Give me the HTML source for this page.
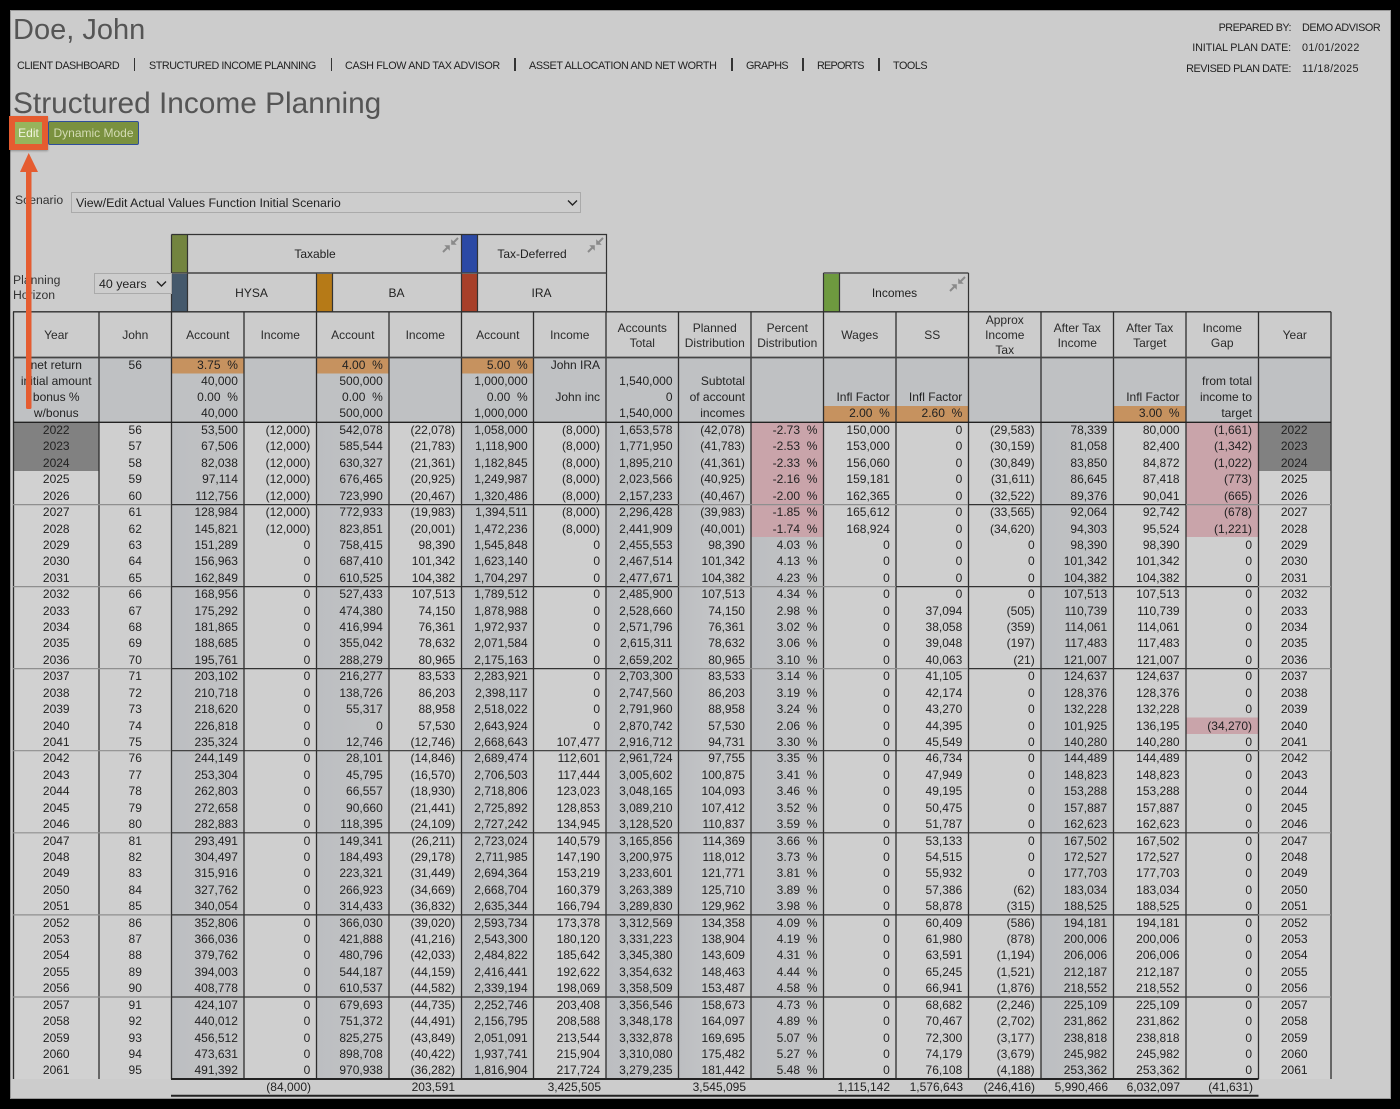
<!DOCTYPE html>
<html><head><meta charset="utf-8"><title>Structured Income Planning</title>
<style>
html,body{margin:0;padding:0;background:#000;width:1400px;height:1109px;overflow:hidden}
body{position:relative;font-family:"Liberation Sans",sans-serif;color:#222;font-size:12px}
#pg{position:absolute;left:10px;top:10px;width:1379px;height:1087px;background:#ccc;border:1px solid #999;box-sizing:content-box}
.a{position:absolute;white-space:nowrap}
svg{position:absolute;left:0;top:0}
.nav{font-size:10.8px;letter-spacing:-.46px;top:60px;line-height:13px;color:#222}
.sep{position:absolute;top:58px;width:1.5px;height:13px;background:#333}
.lb{font-size:10.8px;letter-spacing:-.43px;line-height:13px;color:#222}
.sel{position:absolute;border:1.5px solid #aaa;background:#cdcdcd;box-sizing:border-box;line-height:20px;padding-left:4px;font-size:12.4px;color:#222}
.h{position:absolute;text-align:center;line-height:14.7px;font-size:12px;color:#2a2a2a;display:flex;align-items:center;justify-content:center;width:72.5px;height:45px;top:313px}
.g{position:absolute;left:13.5px;width:1318px}
.r{display:grid;grid-template-columns:85.5px repeat(17,72.45px);height:16.42px;line-height:16.42px;white-space:nowrap}
.r i{font-style:normal;text-align:right;padding-right:6px;display:block;overflow:visible}
.r i:nth-child(1),.r i:nth-child(2),.r i:nth-child(18){text-align:center;padding-right:0}
.t{position:absolute;top:1080px;line-height:15px;text-align:right;white-space:nowrap}
</style></head><body>
<div id="pg"></div>

<svg width="1400" height="1109" viewBox="0 0 1400 1109" fill="none">
<defs>
<linearGradient id="s1"><stop offset="0" stop-color="#bcbec1"/><stop offset="1" stop-color="#c3c4c5"/></linearGradient>
<linearGradient id="s2"><stop offset="0" stop-color="#bcbec1"/><stop offset="1" stop-color="#cccccc"/></linearGradient>
</defs>
<!-- body rows base -->
<rect x="13.5" y="422" width="1317.5" height="657" fill="#cfcfcf"/>
<rect x="171.5" y="422" width="72.5" height="657" fill="url(#s1)"/>
<rect x="316.5" y="422" width="72.5" height="657" fill="url(#s1)"/>
<rect x="461.5" y="422" width="72" height="657" fill="url(#s1)"/>
<rect x="606" y="422" width="72.5" height="657" fill="url(#s1)"/>
<rect x="678.5" y="422" width="72.5" height="657" fill="url(#s2)"/>
<rect x="751" y="422" width="72.5" height="657" fill="url(#s1)"/>
<rect x="1041" y="422" width="72.5" height="657" fill="url(#s1)"/>
<!-- subheader -->
<rect x="13.5" y="357.5" width="1317.5" height="65" fill="#bfc1c3"/>
<rect x="172" y="358" width="71.5" height="15.5" fill="#c6925f"/>
<rect x="317" y="358" width="71.5" height="15.5" fill="#c6925f"/>
<rect x="462" y="358" width="71" height="15.5" fill="#c6925f"/>
<rect x="824" y="406" width="72" height="16" fill="#c6925f"/>
<rect x="896.5" y="406" width="72" height="16" fill="#c6925f"/>
<rect x="1114" y="406" width="72" height="16" fill="#c6925f"/>
<!-- pink / dark -->
<rect x="751.5" y="422.5" width="72" height="114.5" fill="#c9a4aa"/>
<rect x="1186" y="422.5" width="72" height="114.5" fill="#c9a4aa"/>
<rect x="1186" y="717.5" width="72" height="16.5" fill="#c9a4aa"/>
<rect x="13.5" y="422.5" width="85" height="48.5" fill="#818181"/>
<rect x="1258.5" y="422.5" width="72.5" height="48.5" fill="#818181"/>
<rect x="13.5" y="471" width="85" height="608" fill="#d1d1d1"/>
<rect x="1258.5" y="471" width="72.5" height="608" fill="#d1d1d1"/>
<!-- swatches -->
<rect x="172" y="235" width="15.5" height="38" fill="#73843f"/>
<rect x="462" y="235" width="15.5" height="38" fill="#2b49a5"/>
<rect x="172" y="274" width="15.5" height="38" fill="#45596c"/>
<rect x="317" y="274" width="15.5" height="38" fill="#b67a17"/>
<rect x="462" y="274" width="15.5" height="38" fill="#a73f29"/>
<rect x="824" y="274" width="15.5" height="38" fill="#6e9a3f"/>
<!-- header box lines -->
<g stroke="#333" stroke-width="1.2">
<path d="M171.5 234.5H606.5V312M171.5 234.5V312M187.5 234.5V312M461.5 234.5V312M477.5 234.5V312M316.5 273V312M332.5 273V312"/>
<path d="M823.5 273V312M839.5 273V312M968.5 273V312M823.5 273H968.5"/>
<path d="M171.5 273H606.5" stroke="#444" stroke-width="1.6"/>
</g>
<!-- table grid -->
<g stroke="#2e2e2e" stroke-width="1.3">
<path d="M13 311.8H1331"/>
<path d="M13.5 311.8V1079M99 311.8V1079M1331 311.8V1079"/>
<path d="M171.5 311.8V1079M244 311.8V1079M316.5 311.8V1079M389 311.8V1079M461.5 311.8V1079M533.5 311.8V1079M606 311.8V1079M678.5 311.8V1079M751 311.8V1079M823.5 311.8V1079M896 311.8V1079M968.5 311.8V1079M1041 311.8V1079M1113.5 311.8V1079M1186 311.8V1079M1258.5 311.8V1079"/>
<path d="M13 357.5H1331" stroke="#444" stroke-width="1.8"/>
<path d="M13 422.3H1331" stroke="#222" stroke-width="1.3"/>
</g>
<path d="M171 1079H1258.5M171 1095.8H1258.5" stroke="#222" stroke-width="2"/>
<!-- group separators -->
<g stroke-width="1.2">
<path d="M171 504.6H678.5M171 586.6H678.5M896 586.6H1258M171 668.6H678.5M968 668.6H1258M171 750.7H1258M171 832.8H1258M171 914.9H1258M171 997H1258M968 504.6H1186" stroke="#333"/>
<path d="M13 504.6H171M678.5 504.6H968M1186 504.6H1331M13 586.6H171M678.5 586.6H896M1258 586.6H1331M13 668.6H171M678.5 668.6H968M1258 668.6H1331M13 750.7H171M1258 750.7H1331M13 832.8H171M1258 832.8H1331M13 914.9H171M1258 914.9H1331M13 997H171M1258 997H1331" stroke="#8f8f8f"/>
</g>
<!-- compress icons -->
<g id="ic" fill="#8a8a8a" stroke="#8a8a8a" stroke-width="2">
<path d="M443 252L448 247M458 238L453 243" fill="none"/>
<path d="M449.5 245.5L445 245.5L449.5 250ZM451.5 244.5L456 244.5L451.5 240Z" stroke-width=".6"/>
<path d="M588 252L593 247M603 238L598 243" fill="none"/>
<path d="M594.5 245.5L590 245.5L594.5 250ZM596.5 244.5L601 244.5L596.5 240Z" stroke-width=".6"/>
<path d="M950 291L955 286M965 277L960 282" fill="none"/>
<path d="M956.5 284.5L952 284.5L956.5 289ZM958.5 283.5L963 283.5L958.5 279Z" stroke-width=".6"/>
</g>
</svg>

<div class="a" style="left:13px;top:12px;font-size:29px;line-height:36px;color:#555">Doe, John</div>
<div class="a nav" style="left:17px">CLIENT DASHBOARD</div><div class="sep" style="left:133.5px"></div>
<div class="a nav" style="left:149px">STRUCTURED INCOME PLANNING</div><div class="sep" style="left:330.5px"></div>
<div class="a nav" style="left:345px;letter-spacing:-.34px">CASH FLOW AND TAX ADVISOR</div><div class="sep" style="left:514px"></div>
<div class="a nav" style="left:529px;letter-spacing:-.36px">ASSET ALLOCATION AND NET WORTH</div><div class="sep" style="left:731px"></div>
<div class="a nav" style="left:746px;letter-spacing:-.6px">GRAPHS</div><div class="sep" style="left:802px"></div>
<div class="a nav" style="left:817px;letter-spacing:-.75px">REPORTS</div><div class="sep" style="left:878px"></div>
<div class="a nav" style="left:893px">TOOLS</div>

<div class="a lb" style="right:109px;top:22px;letter-spacing:-.5px">PREPARED BY:</div><div class="a lb" style="left:1302px;top:22px">DEMO ADVISOR</div>
<div class="a lb" style="right:109px;top:42px;letter-spacing:-.15px">INITIAL PLAN DATE:</div><div class="a lb" style="left:1302px;top:42px;letter-spacing:.37px">01/01/2022</div>
<div class="a lb" style="right:109px;top:63px">REVISED PLAN DATE:</div><div class="a lb" style="left:1302px;top:63px;letter-spacing:.37px">11/18/2025</div>

<div class="a" style="left:13px;top:86px;font-size:29.85px;line-height:36px;color:#555">Structured Income Planning</div>

<div class="a" style="left:9px;top:116px;width:39px;height:34px;background:#e55c30;box-shadow:0 1px 2px rgba(0,0,0,.3)"></div>
<div class="a" style="left:15px;top:122px;width:27px;height:22px;background:#97b45c;color:#f0f4e0;font-size:12px;line-height:22px;text-align:center">Edit</div>
<div class="a" style="left:48px;top:121px;width:91px;height:24px;box-sizing:border-box;background:#7a913f;border:1.5px solid #2f4e9a;border-radius:2px;color:#d3dbb4;font-size:12px;line-height:22.5px;text-align:center">Dynamic Mode</div>

<div class="a" style="left:15px;top:193px;line-height:14px;font-size:12.2px;color:#333">Scenario</div>
<div class="sel" style="left:71px;top:192px;width:510px;height:21px">View/Edit Actual Values Function Initial Scenario</div>

<div class="a" style="left:13px;top:273px;line-height:14.7px;font-size:12.2px;color:#333">Planning<br>Horizon</div>
<div class="sel" style="left:94px;top:273px;width:78px;height:21px">40 years</div>
<svg width="1400" height="1109" style="pointer-events:none"><path d="M568 200.5L572.5 205L577 200.5" stroke="#222" stroke-width="1.4" fill="none"/><path d="M157 281.5L161.5 286L166 281.5" stroke="#222" stroke-width="1.4" fill="none"/></svg>

<div class="a" style="left:171px;width:288px;top:247px;text-align:center;line-height:14px">Taxable</div>
<div class="a" style="left:477px;width:110px;top:247px;text-align:center;line-height:14px">Tax-Deferred</div>
<div class="a" style="left:187px;width:129px;top:286px;text-align:center;line-height:14px">HYSA</div>
<div class="a" style="left:332px;width:129px;top:286px;text-align:center;line-height:14px">BA</div>
<div class="a" style="left:477px;width:129px;top:286px;text-align:center;line-height:14px">IRA</div>
<div class="a" style="left:840px;width:109px;top:286px;text-align:center;line-height:14px">Incomes</div>

<div class="h" style="left:20px">Year</div>
<div class="h" style="left:99px">John</div>
<div class="h" style="left:171.5px">Account</div>
<div class="h" style="left:244px">Income</div>
<div class="h" style="left:316.5px">Account</div>
<div class="h" style="left:389px">Income</div>
<div class="h" style="left:461.5px">Account</div>
<div class="h" style="left:533.5px">Income</div>
<div class="h" style="left:606px">Accounts<br>Total</div>
<div class="h" style="left:678.5px">Planned<br>Distribution</div>
<div class="h" style="left:751px">Percent<br>Distribution</div>
<div class="h" style="left:823.5px">Wages</div>
<div class="h" style="left:896px">SS</div>
<div class="h" style="left:968.5px">Approx<br>Income<br>Tax</div>
<div class="h" style="left:1041px">After Tax<br>Income</div>
<div class="h" style="left:1113.5px">After Tax<br>Target</div>
<div class="h" style="left:1186px">Income<br>Gap</div>
<div class="h" style="left:1258.5px">Year</div>

<div class="g" style="top:356.6px">
<div class="r" style="height:16.25px;line-height:16.25px"><i>net return</i><i>56</i><i>3.75&nbsp;&nbsp;%</i><i></i><i>4.00&nbsp;&nbsp;%</i><i></i><i>5.00&nbsp;&nbsp;%</i><i>John IRA</i><i></i><i></i><i></i><i></i><i></i><i></i><i></i><i></i><i></i><i></i></div>
<div class="r" style="height:16.25px;line-height:16.25px"><i>initial amount</i><i></i><i>40,000</i><i></i><i>500,000</i><i></i><i>1,000,000</i><i></i><i>1,540,000</i><i>Subtotal</i><i></i><i></i><i></i><i></i><i></i><i></i><i>from total</i><i></i></div>
<div class="r" style="height:16.25px;line-height:16.25px"><i>bonus %</i><i></i><i>0.00&nbsp;&nbsp;%</i><i></i><i>0.00&nbsp;&nbsp;%</i><i></i><i>0.00&nbsp;&nbsp;%</i><i>John inc</i><i>0</i><i>of account</i><i></i><i>Infl Factor</i><i>Infl Factor</i><i></i><i></i><i>Infl Factor</i><i>income to</i><i></i></div>
<div class="r" style="height:16.25px;line-height:16.25px"><i>w/bonus</i><i></i><i>40,000</i><i></i><i>500,000</i><i></i><i>1,000,000</i><i></i><i>1,540,000</i><i>incomes</i><i></i><i>2.00&nbsp;&nbsp;%</i><i>2.60&nbsp;&nbsp;%</i><i></i><i></i><i>3.00&nbsp;&nbsp;%</i><i>target</i><i></i></div>
</div>

<div class="g" style="top:422px">
<div class="r"><i>2022</i><i>56</i><i>53,500</i><i>(12,000)</i><i>542,078</i><i>(22,078)</i><i>1,058,000</i><i>(8,000)</i><i>1,653,578</i><i>(42,078)</i><i>-2.73&nbsp;&nbsp;%</i><i>150,000</i><i>0</i><i>(29,583)</i><i>78,339</i><i>80,000</i><i>(1,661)</i><i>2022</i></div>
<div class="r"><i>2023</i><i>57</i><i>67,506</i><i>(12,000)</i><i>585,544</i><i>(21,783)</i><i>1,118,900</i><i>(8,000)</i><i>1,771,950</i><i>(41,783)</i><i>-2.53&nbsp;&nbsp;%</i><i>153,000</i><i>0</i><i>(30,159)</i><i>81,058</i><i>82,400</i><i>(1,342)</i><i>2023</i></div>
<div class="r"><i>2024</i><i>58</i><i>82,038</i><i>(12,000)</i><i>630,327</i><i>(21,361)</i><i>1,182,845</i><i>(8,000)</i><i>1,895,210</i><i>(41,361)</i><i>-2.33&nbsp;&nbsp;%</i><i>156,060</i><i>0</i><i>(30,849)</i><i>83,850</i><i>84,872</i><i>(1,022)</i><i>2024</i></div>
<div class="r"><i>2025</i><i>59</i><i>97,114</i><i>(12,000)</i><i>676,465</i><i>(20,925)</i><i>1,249,987</i><i>(8,000)</i><i>2,023,566</i><i>(40,925)</i><i>-2.16&nbsp;&nbsp;%</i><i>159,181</i><i>0</i><i>(31,611)</i><i>86,645</i><i>87,418</i><i>(773)</i><i>2025</i></div>
<div class="r"><i>2026</i><i>60</i><i>112,756</i><i>(12,000)</i><i>723,990</i><i>(20,467)</i><i>1,320,486</i><i>(8,000)</i><i>2,157,233</i><i>(40,467)</i><i>-2.00&nbsp;&nbsp;%</i><i>162,365</i><i>0</i><i>(32,522)</i><i>89,376</i><i>90,041</i><i>(665)</i><i>2026</i></div>
</div>
<div class="g" style="top:504.1px">
<div class="r"><i>2027</i><i>61</i><i>128,984</i><i>(12,000)</i><i>772,933</i><i>(19,983)</i><i>1,394,511</i><i>(8,000)</i><i>2,296,428</i><i>(39,983)</i><i>-1.85&nbsp;&nbsp;%</i><i>165,612</i><i>0</i><i>(33,565)</i><i>92,064</i><i>92,742</i><i>(678)</i><i>2027</i></div>
<div class="r"><i>2028</i><i>62</i><i>145,821</i><i>(12,000)</i><i>823,851</i><i>(20,001)</i><i>1,472,236</i><i>(8,000)</i><i>2,441,909</i><i>(40,001)</i><i>-1.74&nbsp;&nbsp;%</i><i>168,924</i><i>0</i><i>(34,620)</i><i>94,303</i><i>95,524</i><i>(1,221)</i><i>2028</i></div>
<div class="r"><i>2029</i><i>63</i><i>151,289</i><i>0</i><i>758,415</i><i>98,390</i><i>1,545,848</i><i>0</i><i>2,455,553</i><i>98,390</i><i>4.03&nbsp;&nbsp;%</i><i>0</i><i>0</i><i>0</i><i>98,390</i><i>98,390</i><i>0</i><i>2029</i></div>
<div class="r"><i>2030</i><i>64</i><i>156,963</i><i>0</i><i>687,410</i><i>101,342</i><i>1,623,140</i><i>0</i><i>2,467,514</i><i>101,342</i><i>4.13&nbsp;&nbsp;%</i><i>0</i><i>0</i><i>0</i><i>101,342</i><i>101,342</i><i>0</i><i>2030</i></div>
<div class="r"><i>2031</i><i>65</i><i>162,849</i><i>0</i><i>610,525</i><i>104,382</i><i>1,704,297</i><i>0</i><i>2,477,671</i><i>104,382</i><i>4.23&nbsp;&nbsp;%</i><i>0</i><i>0</i><i>0</i><i>104,382</i><i>104,382</i><i>0</i><i>2031</i></div>
</div>
<div class="g" style="top:586.2px">
<div class="r"><i>2032</i><i>66</i><i>168,956</i><i>0</i><i>527,433</i><i>107,513</i><i>1,789,512</i><i>0</i><i>2,485,900</i><i>107,513</i><i>4.34&nbsp;&nbsp;%</i><i>0</i><i>0</i><i>0</i><i>107,513</i><i>107,513</i><i>0</i><i>2032</i></div>
<div class="r"><i>2033</i><i>67</i><i>175,292</i><i>0</i><i>474,380</i><i>74,150</i><i>1,878,988</i><i>0</i><i>2,528,660</i><i>74,150</i><i>2.98&nbsp;&nbsp;%</i><i>0</i><i>37,094</i><i>(505)</i><i>110,739</i><i>110,739</i><i>0</i><i>2033</i></div>
<div class="r"><i>2034</i><i>68</i><i>181,865</i><i>0</i><i>416,994</i><i>76,361</i><i>1,972,937</i><i>0</i><i>2,571,796</i><i>76,361</i><i>3.02&nbsp;&nbsp;%</i><i>0</i><i>38,058</i><i>(359)</i><i>114,061</i><i>114,061</i><i>0</i><i>2034</i></div>
<div class="r"><i>2035</i><i>69</i><i>188,685</i><i>0</i><i>355,042</i><i>78,632</i><i>2,071,584</i><i>0</i><i>2,615,311</i><i>78,632</i><i>3.06&nbsp;&nbsp;%</i><i>0</i><i>39,048</i><i>(197)</i><i>117,483</i><i>117,483</i><i>0</i><i>2035</i></div>
<div class="r"><i>2036</i><i>70</i><i>195,761</i><i>0</i><i>288,279</i><i>80,965</i><i>2,175,163</i><i>0</i><i>2,659,202</i><i>80,965</i><i>3.10&nbsp;&nbsp;%</i><i>0</i><i>40,063</i><i>(21)</i><i>121,007</i><i>121,007</i><i>0</i><i>2036</i></div>
</div>
<div class="g" style="top:668.3px">
<div class="r"><i>2037</i><i>71</i><i>203,102</i><i>0</i><i>216,277</i><i>83,533</i><i>2,283,921</i><i>0</i><i>2,703,300</i><i>83,533</i><i>3.14&nbsp;&nbsp;%</i><i>0</i><i>41,105</i><i>0</i><i>124,637</i><i>124,637</i><i>0</i><i>2037</i></div>
<div class="r"><i>2038</i><i>72</i><i>210,718</i><i>0</i><i>138,726</i><i>86,203</i><i>2,398,117</i><i>0</i><i>2,747,560</i><i>86,203</i><i>3.19&nbsp;&nbsp;%</i><i>0</i><i>42,174</i><i>0</i><i>128,376</i><i>128,376</i><i>0</i><i>2038</i></div>
<div class="r"><i>2039</i><i>73</i><i>218,620</i><i>0</i><i>55,317</i><i>88,958</i><i>2,518,022</i><i>0</i><i>2,791,960</i><i>88,958</i><i>3.24&nbsp;&nbsp;%</i><i>0</i><i>43,270</i><i>0</i><i>132,228</i><i>132,228</i><i>0</i><i>2039</i></div>
<div class="r"><i>2040</i><i>74</i><i>226,818</i><i>0</i><i>0</i><i>57,530</i><i>2,643,924</i><i>0</i><i>2,870,742</i><i>57,530</i><i>2.06&nbsp;&nbsp;%</i><i>0</i><i>44,395</i><i>0</i><i>101,925</i><i>136,195</i><i>(34,270)</i><i>2040</i></div>
<div class="r"><i>2041</i><i>75</i><i>235,324</i><i>0</i><i>12,746</i><i>(12,746)</i><i>2,668,643</i><i>107,477</i><i>2,916,712</i><i>94,731</i><i>3.30&nbsp;&nbsp;%</i><i>0</i><i>45,549</i><i>0</i><i>140,280</i><i>140,280</i><i>0</i><i>2041</i></div>
</div>
<div class="g" style="top:750.4px">
<div class="r"><i>2042</i><i>76</i><i>244,149</i><i>0</i><i>28,101</i><i>(14,846)</i><i>2,689,474</i><i>112,601</i><i>2,961,724</i><i>97,755</i><i>3.35&nbsp;&nbsp;%</i><i>0</i><i>46,734</i><i>0</i><i>144,489</i><i>144,489</i><i>0</i><i>2042</i></div>
<div class="r"><i>2043</i><i>77</i><i>253,304</i><i>0</i><i>45,795</i><i>(16,570)</i><i>2,706,503</i><i>117,444</i><i>3,005,602</i><i>100,875</i><i>3.41&nbsp;&nbsp;%</i><i>0</i><i>47,949</i><i>0</i><i>148,823</i><i>148,823</i><i>0</i><i>2043</i></div>
<div class="r"><i>2044</i><i>78</i><i>262,803</i><i>0</i><i>66,557</i><i>(18,930)</i><i>2,718,806</i><i>123,023</i><i>3,048,165</i><i>104,093</i><i>3.46&nbsp;&nbsp;%</i><i>0</i><i>49,195</i><i>0</i><i>153,288</i><i>153,288</i><i>0</i><i>2044</i></div>
<div class="r"><i>2045</i><i>79</i><i>272,658</i><i>0</i><i>90,660</i><i>(21,441)</i><i>2,725,892</i><i>128,853</i><i>3,089,210</i><i>107,412</i><i>3.52&nbsp;&nbsp;%</i><i>0</i><i>50,475</i><i>0</i><i>157,887</i><i>157,887</i><i>0</i><i>2045</i></div>
<div class="r"><i>2046</i><i>80</i><i>282,883</i><i>0</i><i>118,395</i><i>(24,109)</i><i>2,727,242</i><i>134,945</i><i>3,128,520</i><i>110,837</i><i>3.59&nbsp;&nbsp;%</i><i>0</i><i>51,787</i><i>0</i><i>162,623</i><i>162,623</i><i>0</i><i>2046</i></div>
</div>
<div class="g" style="top:832.5px">
<div class="r"><i>2047</i><i>81</i><i>293,491</i><i>0</i><i>149,341</i><i>(26,211)</i><i>2,723,024</i><i>140,579</i><i>3,165,856</i><i>114,369</i><i>3.66&nbsp;&nbsp;%</i><i>0</i><i>53,133</i><i>0</i><i>167,502</i><i>167,502</i><i>0</i><i>2047</i></div>
<div class="r"><i>2048</i><i>82</i><i>304,497</i><i>0</i><i>184,493</i><i>(29,178)</i><i>2,711,985</i><i>147,190</i><i>3,200,975</i><i>118,012</i><i>3.73&nbsp;&nbsp;%</i><i>0</i><i>54,515</i><i>0</i><i>172,527</i><i>172,527</i><i>0</i><i>2048</i></div>
<div class="r"><i>2049</i><i>83</i><i>315,916</i><i>0</i><i>223,321</i><i>(31,449)</i><i>2,694,364</i><i>153,219</i><i>3,233,601</i><i>121,771</i><i>3.81&nbsp;&nbsp;%</i><i>0</i><i>55,932</i><i>0</i><i>177,703</i><i>177,703</i><i>0</i><i>2049</i></div>
<div class="r"><i>2050</i><i>84</i><i>327,762</i><i>0</i><i>266,923</i><i>(34,669)</i><i>2,668,704</i><i>160,379</i><i>3,263,389</i><i>125,710</i><i>3.89&nbsp;&nbsp;%</i><i>0</i><i>57,386</i><i>(62)</i><i>183,034</i><i>183,034</i><i>0</i><i>2050</i></div>
<div class="r"><i>2051</i><i>85</i><i>340,054</i><i>0</i><i>314,433</i><i>(36,832)</i><i>2,635,344</i><i>166,794</i><i>3,289,830</i><i>129,962</i><i>3.98&nbsp;&nbsp;%</i><i>0</i><i>58,878</i><i>(315)</i><i>188,525</i><i>188,525</i><i>0</i><i>2051</i></div>
</div>
<div class="g" style="top:914.6px">
<div class="r"><i>2052</i><i>86</i><i>352,806</i><i>0</i><i>366,030</i><i>(39,020)</i><i>2,593,734</i><i>173,378</i><i>3,312,569</i><i>134,358</i><i>4.09&nbsp;&nbsp;%</i><i>0</i><i>60,409</i><i>(586)</i><i>194,181</i><i>194,181</i><i>0</i><i>2052</i></div>
<div class="r"><i>2053</i><i>87</i><i>366,036</i><i>0</i><i>421,888</i><i>(41,216)</i><i>2,543,300</i><i>180,120</i><i>3,331,223</i><i>138,904</i><i>4.19&nbsp;&nbsp;%</i><i>0</i><i>61,980</i><i>(878)</i><i>200,006</i><i>200,006</i><i>0</i><i>2053</i></div>
<div class="r"><i>2054</i><i>88</i><i>379,762</i><i>0</i><i>480,796</i><i>(42,033)</i><i>2,484,822</i><i>185,642</i><i>3,345,380</i><i>143,609</i><i>4.31&nbsp;&nbsp;%</i><i>0</i><i>63,591</i><i>(1,194)</i><i>206,006</i><i>206,006</i><i>0</i><i>2054</i></div>
<div class="r"><i>2055</i><i>89</i><i>394,003</i><i>0</i><i>544,187</i><i>(44,159)</i><i>2,416,441</i><i>192,622</i><i>3,354,632</i><i>148,463</i><i>4.44&nbsp;&nbsp;%</i><i>0</i><i>65,245</i><i>(1,521)</i><i>212,187</i><i>212,187</i><i>0</i><i>2055</i></div>
<div class="r"><i>2056</i><i>90</i><i>408,778</i><i>0</i><i>610,537</i><i>(44,582)</i><i>2,339,194</i><i>198,069</i><i>3,358,509</i><i>153,487</i><i>4.58&nbsp;&nbsp;%</i><i>0</i><i>66,941</i><i>(1,876)</i><i>218,552</i><i>218,552</i><i>0</i><i>2056</i></div>
</div>
<div class="g" style="top:996.7px">
<div class="r"><i>2057</i><i>91</i><i>424,107</i><i>0</i><i>679,693</i><i>(44,735)</i><i>2,252,746</i><i>203,408</i><i>3,356,546</i><i>158,673</i><i>4.73&nbsp;&nbsp;%</i><i>0</i><i>68,682</i><i>(2,246)</i><i>225,109</i><i>225,109</i><i>0</i><i>2057</i></div>
<div class="r"><i>2058</i><i>92</i><i>440,012</i><i>0</i><i>751,372</i><i>(44,491)</i><i>2,156,795</i><i>208,588</i><i>3,348,178</i><i>164,097</i><i>4.89&nbsp;&nbsp;%</i><i>0</i><i>70,467</i><i>(2,702)</i><i>231,862</i><i>231,862</i><i>0</i><i>2058</i></div>
<div class="r"><i>2059</i><i>93</i><i>456,512</i><i>0</i><i>825,275</i><i>(43,849)</i><i>2,051,091</i><i>213,544</i><i>3,332,878</i><i>169,695</i><i>5.07&nbsp;&nbsp;%</i><i>0</i><i>72,300</i><i>(3,177)</i><i>238,818</i><i>238,818</i><i>0</i><i>2059</i></div>
<div class="r"><i>2060</i><i>94</i><i>473,631</i><i>0</i><i>898,708</i><i>(40,422)</i><i>1,937,741</i><i>215,904</i><i>3,310,080</i><i>175,482</i><i>5.27&nbsp;&nbsp;%</i><i>0</i><i>74,179</i><i>(3,679)</i><i>245,982</i><i>245,982</i><i>0</i><i>2060</i></div>
<div class="r"><i>2061</i><i>95</i><i>491,392</i><i>0</i><i>970,938</i><i>(36,282)</i><i>1,816,904</i><i>217,724</i><i>3,279,235</i><i>181,442</i><i>5.48&nbsp;&nbsp;%</i><i>0</i><i>76,108</i><i>(4,188)</i><i>253,362</i><i>253,362</i><i>0</i><i>2061</i></div>
</div>

<div class="t" style="right:1089px">(84,000)</div>
<div class="t" style="right:945px">203,591</div>
<div class="t" style="right:799px">3,425,505</div>
<div class="t" style="right:654px">3,545,095</div>
<div class="t" style="right:510px">1,115,142</div>
<div class="t" style="right:437px">1,576,643</div>
<div class="t" style="right:365px">(246,416)</div>
<div class="t" style="right:292px">5,990,466</div>
<div class="t" style="right:220px">6,032,097</div>
<div class="t" style="right:147px">(41,631)</div>

<svg width="1400" height="1109" style="pointer-events:none">
<rect x="26" y="170" width="5.5" height="239" rx="1.5" fill="#e55c30"/>
<path d="M28.7 153L38 172H20Z" fill="#e55c30"/>
</svg>
</body></html>
